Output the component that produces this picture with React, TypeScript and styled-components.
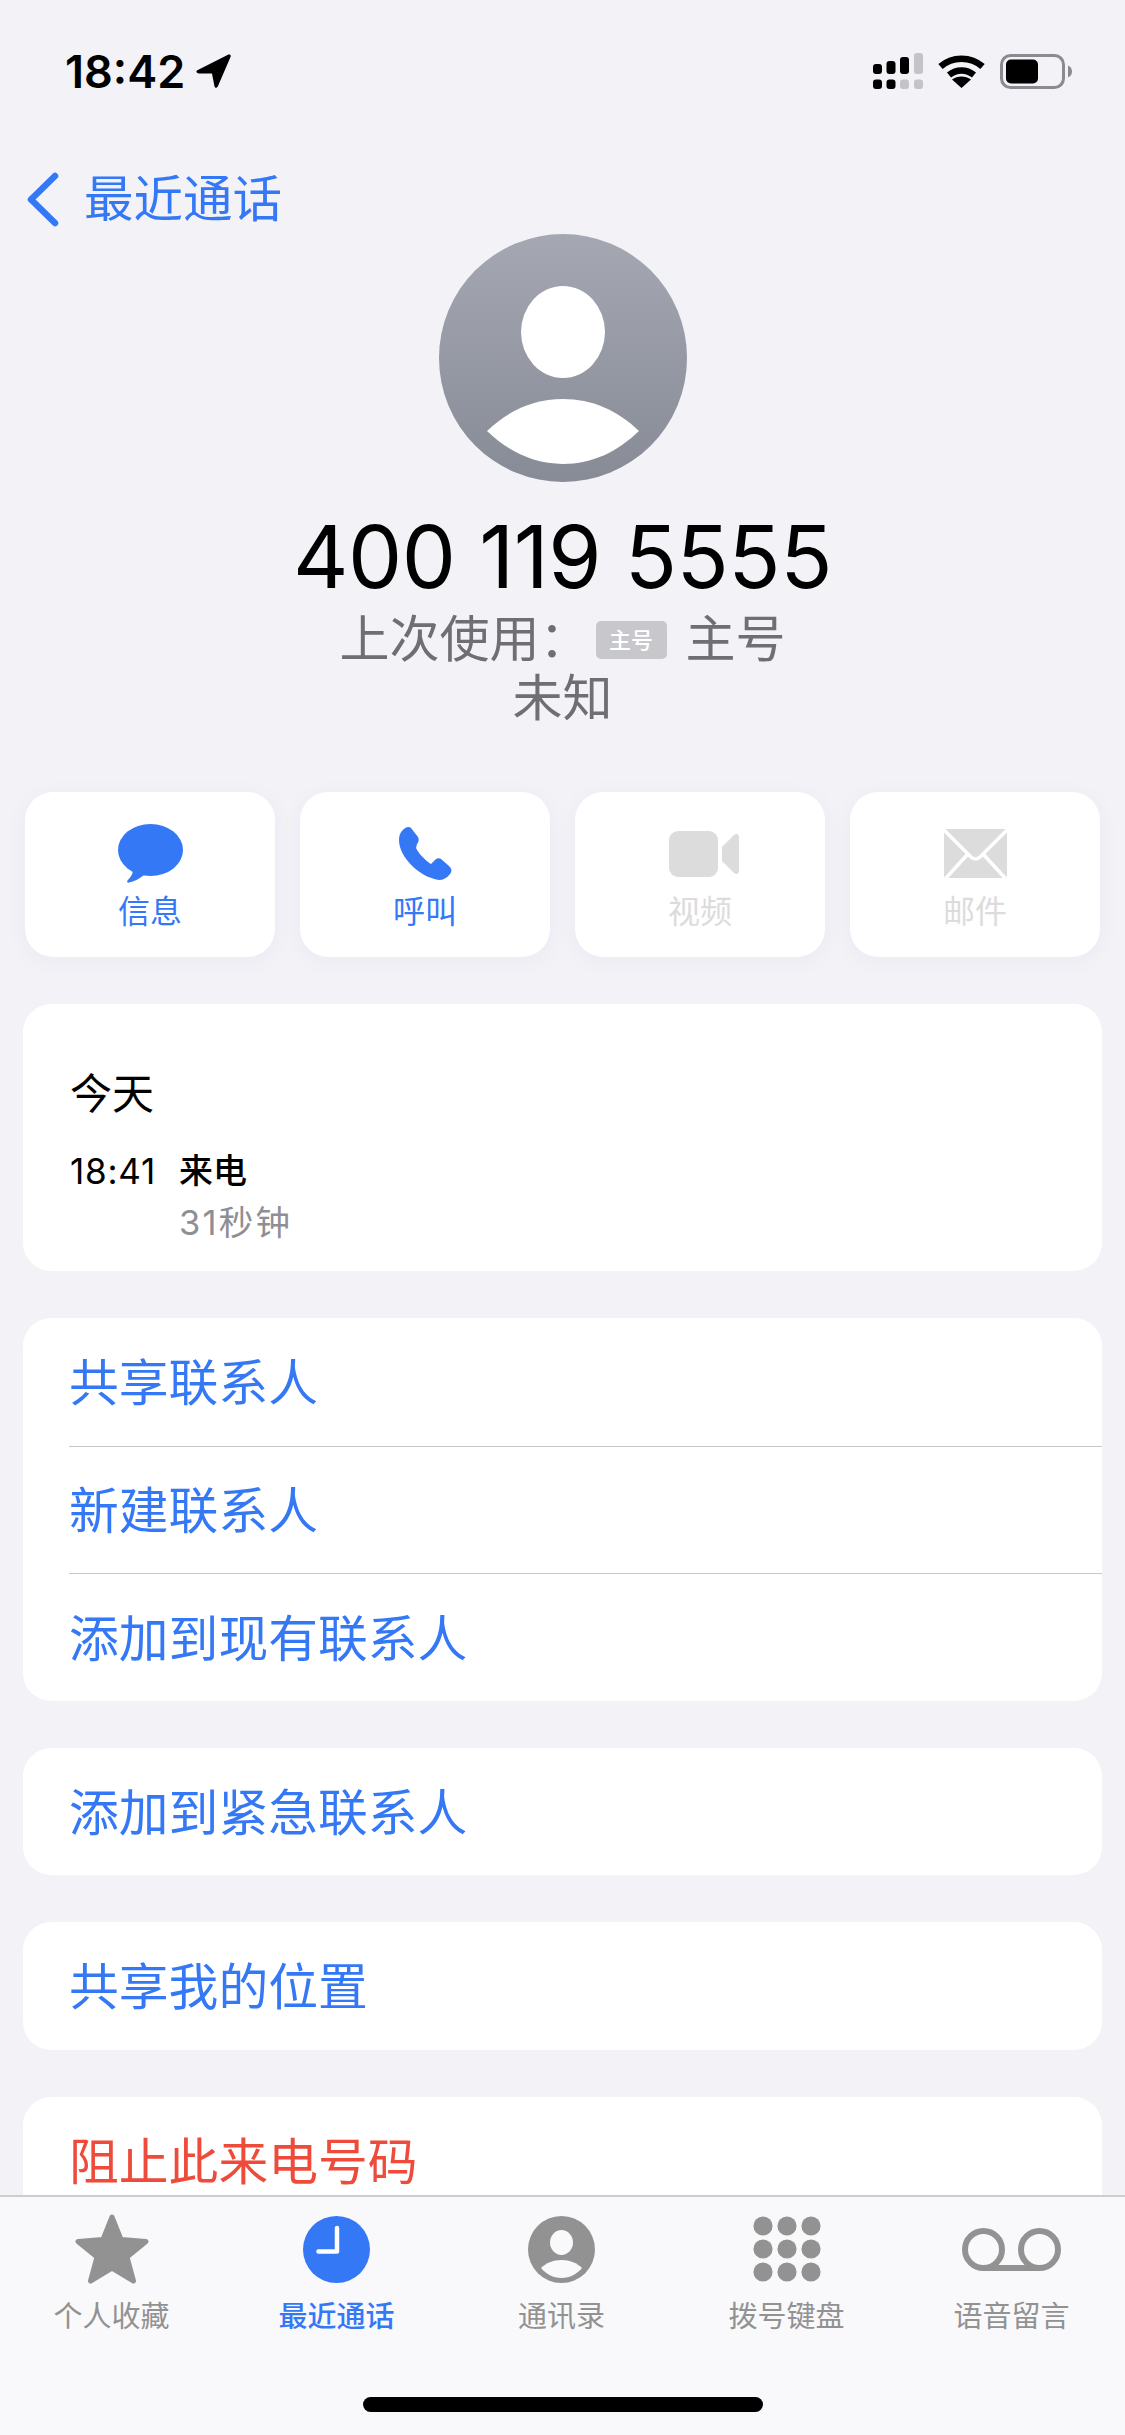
import styled, { createGlobalStyle } from "styled-components";

const BLUE = "#3478f6";
const GREY = "#929292";
const MUTED = "#dcdcdc";

const GlobalStyle = createGlobalStyle`
  html, body {
    margin: 0;
    padding: 0;
    background: #f2f2f7;
  }
  * {
    box-sizing: border-box;
  }
  svg {
    display: block;
  }
`;

const Page = styled.div`
  position: relative;
  width: 1125px;
  height: 2435px;
  overflow: hidden;
  background: #f2f2f7;
  font-family: Inter, "Noto Sans CJK SC", sans-serif;
  color: #000;
`;

const StatusBar = styled.div`
  height: 142px;
  padding: 0 53px 0 65px;
  display: flex;
  align-items: center;
  justify-content: space-between;
`;

const StatusLeft = styled.div`
  display: flex;
  align-items: center;
  gap: 11px;
  font-size: 45px;
  font-weight: 600;
  letter-spacing: 0;
`;

const StatusRight = styled.div`
  display: flex;
  align-items: center;
  gap: 15px;
`;

const NavBar = styled.div`
  height: 92px;
  padding: 23px 0 0 26px;
  display: flex;
  align-items: center;
  gap: 25px;
  color: ${BLUE};
  font-size: 49.5px;
`;

const NavTitle = styled.span`
  margin-bottom: 9px;
`;

const Hero = styled.div`
  display: flex;
  flex-direction: column;
  align-items: center;
`;

const PhoneNumber = styled.div`
  margin: 32px 0 10px;
  font-size: 86px;
  line-height: 86px;
  letter-spacing: -0.5px;
`;

const SubLine = styled.div`
  height: 59px;
  display: flex;
  align-items: center;
  font-size: 50px;
  line-height: 59px;
  color: #6f6f73;
`;

const Badge = styled.span`
  width: 71px;
  height: 38px;
  margin: 0 19px 0 6px;
  border-radius: 5px;
  background: #c7c7cc;
  color: #fff;
  font-size: 22px;
  font-weight: 500;
  line-height: 38px;
  text-align: center;
`;

const Actions = styled.div`
  margin-top: 64px;
  padding: 0 25px;
  display: grid;
  grid-template-columns: repeat(4, 250px);
  justify-content: space-between;
`;

const ActionCard = styled.div<{ $color: string }>`
  height: 165px;
  border-radius: 28px;
  background: #fff;
  box-shadow: 0 4px 24px rgba(60, 60, 90, 0.04);
  color: ${(p) => p.$color};
  display: flex;
  flex-direction: column;
  align-items: center;
`;

const ActionIcon = styled.div`
  height: 63px;
  margin-top: 30px;
  display: flex;
  align-items: center;
  justify-content: center;
`;

const ActionLabel = styled.div`
  margin-top: 8px;
  font-size: 32px;
  line-height: 38px;
`;

const Card = styled.div`
  margin: 47px 23px 0;
  border-radius: 28px;
  background: #fff;
  overflow: hidden;
`;

const HistoryCard = styled(Card)`
  height: 267px;
  padding: 65px 46px 0 47px;
`;

const DayLabel = styled.div`
  font-size: 42px;
  line-height: 50px;
`;

const CallRow = styled.div`
  margin-top: 29px;
  display: flex;
  gap: 25px;
`;

const CallTime = styled.div`
  width: 84px;
  font-size: 35px;
  line-height: 46px;
  letter-spacing: 0.8px;
  white-space: nowrap;
`;

const CallType = styled.div`
  font-size: 34px;
  font-weight: 500;
  line-height: 46px;
`;

const CallLength = styled.div`
  margin-top: 8px;
  font-size: 34.5px;
  letter-spacing: 2.2px;
  line-height: 42px;
  color: #8e8e93;
`;

const Row = styled.div<{ $danger?: boolean; $first?: boolean }>`
  height: 127.5px;
  margin-left: 46px;
  padding-bottom: 5px;
  display: flex;
  align-items: center;
  font-size: 49.8px;
  color: ${(p) => (p.$danger ? "#ee4b3b" : BLUE)};
  border-top: ${(p) => (p.$first ? "none" : "1px solid #c6c6c8")};
`;

const TabBar = styled.div`
  position: absolute;
  left: 0;
  right: 0;
  bottom: 0;
  height: 240px;
  padding: 16px 2px 0 0;
  background: #f9f9fb;
  border-top: 2px solid #cdcdd0;
  display: grid;
  grid-template-columns: repeat(5, 225px);
  justify-content: center;
`;

const Tab = styled.div<{ $active?: boolean }>`
  display: flex;
  flex-direction: column;
  align-items: center;
  color: ${(p) => (p.$active ? BLUE : GREY)};
`;

const TabIcon = styled.div`
  height: 72px;
  display: flex;
  align-items: center;
  justify-content: center;
`;

const TabLabel = styled.div<{ $active?: boolean }>`
  margin-top: 14px;
  font-size: 29px;
  font-weight: ${(p) => (p.$active ? 500 : 400)};
  line-height: 36px;
`;

const HomeIndicator = styled.div`
  position: absolute;
  left: 363px;
  bottom: 23px;
  width: 400px;
  height: 15px;
  border-radius: 8px;
  background: #000;
`;

const LocationArrow = () => (
  <svg width="35" height="34" viewBox="0 0 35 34">
    <path d="M32 .8c2-.9 3.200.3 2.500 2.200L22 32c-1 2.400-3.200 2.400-3.600 0L16 19.500H3C.4 19.500-.6 17 1.800 15.900Z" fill="#000" />
  </svg>
);

const SignalIcon = () => (
  <svg width="50" height="36" viewBox="0 0 50 36">
    <g fill="#000">
      <rect x="0" y="11" width="9" height="10" rx="3" />
      <rect x="13.500" y="8" width="9" height="13" rx="3" />
      <rect x="27" y="4" width="9" height="17" rx="3" />
      <rect x="0" y="26.500" width="9" height="9.500" rx="3" />
      <rect x="13.500" y="26.500" width="9" height="9.500" rx="3" />
    </g>
    <g fill="#c4c4c8">
      <rect x="41" y="0" width="9" height="21" rx="3" />
      <rect x="27" y="26.500" width="9" height="9.500" rx="3" />
      <rect x="41" y="26.500" width="9" height="9.500" rx="3" />
    </g>
  </svg>
);

const WifiIcon = () => (
  <svg width="47" height="34" viewBox="0 0 47 34">
    <path d="M2.500 12.500C14 2 33 2 44.500 12.500" fill="none" stroke="#000" strokeWidth="6.500" />
    <path d="M11 21c7.500-6 17.500-6 25 0" fill="none" stroke="#000" strokeWidth="6.500" />
    <path d="M23.500 34 14 25.500c5.500-4 13.500-4 19 0Z" fill="#000" />
  </svg>
);

const BatteryIcon = () => (
  <svg width="72" height="35" viewBox="0 0 72 35">
    <rect x="1.500" y="1.500" width="62" height="32" rx="9" fill="none" stroke="#8b8b8f" strokeWidth="3" />
    <rect x="6" y="5.500" width="32" height="24" rx="5" fill="#000" />
    <path d="M68 11.500c2.500 1 4 3.200 4 6s-1.500 5-4 6Z" fill="#8b8b8f" />
  </svg>
);

const BackChevron = () => (
  <svg width="33" height="55" viewBox="0 0 33 55">
    <path d="M29 4 5 27.500 29 51" fill="none" stroke={BLUE} strokeWidth="6.500" strokeLinecap="round" strokeLinejoin="round" />
  </svg>
);

const Avatar = () => (
  <svg width="248" height="248" viewBox="0 0 248 248">
    <defs>
      <linearGradient id="avatarFill" x1="0" y1="0" x2="0" y2="1">
        <stop offset="0" stopColor="#a5a8b3" />
        <stop offset="1" stopColor="#878b96" />
      </linearGradient>
    </defs>
    <circle cx="124" cy="124" r="124" fill="url(#avatarFill)" />
    <ellipse cx="124" cy="98" rx="42" ry="46" fill="#fff" />
    <path d="M48 197C70 176 95 165 124 165s54 11 76 32c-22 21-47 33-76 33s-54-12-76-33Z" fill="#fff" />
  </svg>
);

const BubbleIcon = () => (
  <svg width="65" height="59" viewBox="0 0 65 59">
    <ellipse cx="32.500" cy="26" rx="32.500" ry="26" fill="currentColor" />
    <path d="M15 46c0 4-3 8-5.500 10.500-1 1.500 0 2.500 1.500 2.100 5-1.100 10-3.600 15-7.600Z" fill="currentColor" />
  </svg>
);

const PhoneIcon = () => (
  <svg width="53" height="53" viewBox="0 0 53 53">
    <path d="M3 4C6 0 10-1 12 1l7 9c1 2 1 5-1 7l-1 4c3 6 9 12 15 16l4-4c2-2 4-2 6-1l8 7c3 3 3 5 1 8-3 4-7 6-11 6C20 50 0 30 0 13c0-4 1-7 3-9Z" fill="currentColor" />
  </svg>
);

const VideoIcon = () => (
  <svg width="78" height="46" viewBox="-8 0 78 46">
    <rect x="0" y="0" width="49" height="46" rx="9" fill="currentColor" />
    <path d="M53 16 65 4c2-2 5-1 5 2v34c0 3-3 4-5 2L53 30Z" fill="currentColor" />
  </svg>
);

const MailIcon = () => (
  <svg width="63" height="49" viewBox="0 0 63 49">
    <rect x="0" y="0" width="63" height="49" rx="3" fill="currentColor" />
    <path d="M0 1 27 28c2.500 2.500 6.500 2.500 9 0L63 1M2 49 23 26M61 49 40 26" fill="none" stroke="#fff" strokeWidth="3.500" />
  </svg>
);

const StarIcon = () => (
  <svg width="74" height="70" viewBox="0 0 74 70">
    <path d="M37 3 46 25.500 71 27.500 52 43 58.500 67 37 54 15.500 67 22 43 3 27.500 28 25.500Z" fill="currentColor" stroke="currentColor" strokeWidth="5" strokeLinejoin="round" />
  </svg>
);

const ClockIcon = () => (
  <svg width="67" height="67" viewBox="0 0 67 67">
    <circle cx="33.500" cy="33.500" r="33.500" fill="currentColor" />
    <path d="M34 12v23.500H15.500" fill="none" stroke="#fff" strokeWidth="4.500" strokeLinecap="round" strokeLinejoin="round" />
  </svg>
);

const PersonIcon = () => (
  <svg width="67" height="67" viewBox="0 0 67 67">
    <circle cx="33.500" cy="33.500" r="33.500" fill="currentColor" />
    <ellipse cx="33.500" cy="26.500" rx="11.500" ry="12.500" fill="#f9f9fb" />
    <path d="M13 52c5-5 12-8 20.500-8S49 47 54 52c-5 6-12 10-20.500 10S18 58 13 52Z" fill="#f9f9fb" />
  </svg>
);

const KeypadIcon = () => (
  <svg width="68" height="66" viewBox="0 0 68 66">
    {[10, 33, 56].map((cy) =>
      [10, 34, 58].map((cx) => (
        <circle key={`${cx}-${cy}`} cx={cx} cy={cy} r="9.600" fill="currentColor" />
      )),
    )}
  </svg>
);

const VoicemailIcon = () => (
  <svg width="99" height="43" viewBox="0 0 99 43">
    <circle cx="21.500" cy="21.500" r="18.500" fill="none" stroke="currentColor" strokeWidth="6" />
    <circle cx="77.500" cy="21.500" r="18.500" fill="none" stroke="currentColor" strokeWidth="6" />
    <path d="M21.500 40h56" fill="none" stroke="currentColor" strokeWidth="6" />
  </svg>
);

const actions = [
  { label: "信息", icon: <BubbleIcon />, color: BLUE },
  { label: "呼叫", icon: <PhoneIcon />, color: BLUE },
  { label: "视频", icon: <VideoIcon />, color: MUTED },
  { label: "邮件", icon: <MailIcon />, color: MUTED },
];

const tabs = [
  { label: "个人收藏", icon: <StarIcon /> },
  { label: "最近通话", icon: <ClockIcon />, active: true },
  { label: "通讯录", icon: <PersonIcon /> },
  { label: "拨号键盘", icon: <KeypadIcon /> },
  { label: "语音留言", icon: <VoicemailIcon /> },
];

const App = () => (
  <Page>
    <GlobalStyle />
    <StatusBar>
      <StatusLeft>
        18:42
        <LocationArrow />
      </StatusLeft>
      <StatusRight>
        <SignalIcon />
        <WifiIcon />
        <BatteryIcon />
      </StatusRight>
    </StatusBar>

    <NavBar>
      <BackChevron />
      <NavTitle>最近通话</NavTitle>
    </NavBar>

    <Hero>
      <Avatar />
      <PhoneNumber>400 119 5555</PhoneNumber>
      <SubLine>
        上次使用：
        <Badge>主号</Badge>
        主号
      </SubLine>
      <SubLine>未知</SubLine>
    </Hero>

    <Actions>
      {actions.map((a) => (
        <ActionCard key={a.label} $color={a.color}>
          <ActionIcon>{a.icon}</ActionIcon>
          <ActionLabel>{a.label}</ActionLabel>
        </ActionCard>
      ))}
    </Actions>

    <HistoryCard>
      <DayLabel>今天</DayLabel>
      <CallRow>
        <CallTime>18:41</CallTime>
        <div>
          <CallType>来电</CallType>
          <CallLength>31秒钟</CallLength>
        </div>
      </CallRow>
    </HistoryCard>

    <Card>
      <Row $first>共享联系人</Row>
      <Row>新建联系人</Row>
      <Row>添加到现有联系人</Row>
    </Card>
    <Card>
      <Row $first>添加到紧急联系人</Row>
    </Card>
    <Card>
      <Row $first>共享我的位置</Row>
    </Card>
    <Card>
      <Row $first $danger>阻止此来电号码</Row>
    </Card>

    <TabBar>
      {tabs.map((t) => (
        <Tab key={t.label} $active={t.active}>
          <TabIcon>{t.icon}</TabIcon>
          <TabLabel $active={t.active}>{t.label}</TabLabel>
        </Tab>
      ))}
    </TabBar>
    <HomeIndicator />
  </Page>
);

export default App;
